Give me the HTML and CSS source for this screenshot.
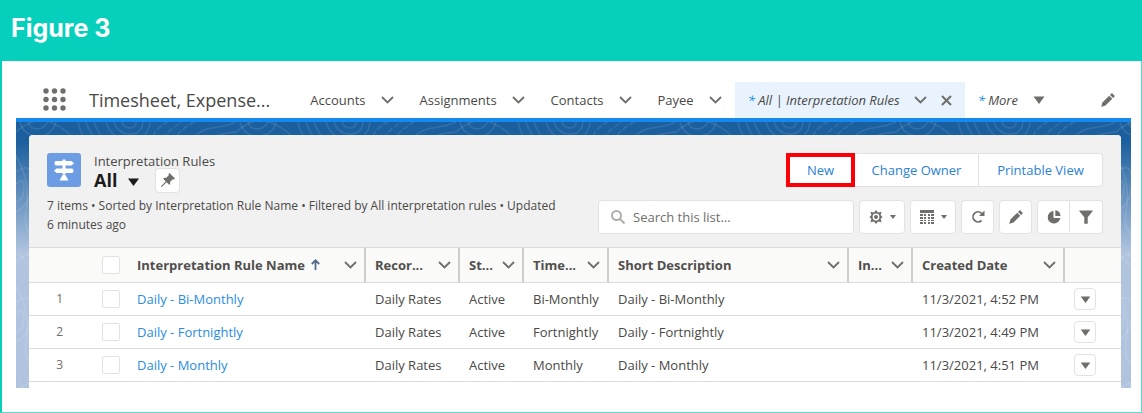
FILE: index.html
```html
<!DOCTYPE html>
<html lang="en">
<head>
    <meta charset="UTF-8">
    <meta name="viewport" content="width=device-width, initial-scale=1.0">
    <title>Interpretation Rules</title>
    <link rel="stylesheet" href="styles.css">
</head>
<body>
    <!-- shared icons -->
    <svg class="sprite" aria-hidden="true">
        <symbol id="chevron" viewBox="0 0 13 8"><path d="M1 1l5.500 5.500L12 1" fill="none" stroke="currentColor" stroke-width="1.800"/></symbol>
        <symbol id="down" viewBox="0 0 12 8"><path d="M0.500 0.500h11L6 8z" fill="currentColor"/></symbol>
        <symbol id="pencil" viewBox="0 0 14 14"><path d="M10.300 0.600q.6-.6 1.200 0l1.900 1.900q.6.6 0 1.200l-1.300 1.300-3.100-3.100zM8.200 2.700l3.100 3.100-6.800 6.800-3.900 1.100q-.4.100-.3-.3L1.400 9.500z" fill="currentColor"/></symbol>
    </svg>

    <section class="figure">
        <h1>Figure 3</h1>
        <div class="figure-body">
            <nav>
                <button class="launcher" aria-label="App launcher">
                    <svg width="24" height="24" viewBox="0 0 24 24" fill="#706e6b">
                        <circle cx="3" cy="3" r="2.700"/><circle cx="11.500" cy="3" r="2.700"/><circle cx="20" cy="3" r="2.700"/>
                        <circle cx="3" cy="11.500" r="2.700"/><circle cx="11.500" cy="11.500" r="2.700"/><circle cx="20" cy="11.500" r="2.700"/>
                        <circle cx="3" cy="20" r="2.700"/><circle cx="11.500" cy="20" r="2.700"/><circle cx="20" cy="20" r="2.700"/>
                    </svg>
                </button>
                <span class="app-name">Timesheet, Expense...</span>
                <ul class="tabs">
                    <li><a href="#">Accounts</a><button aria-label="Accounts list"><svg class="chevron"><use href="#chevron"/></svg></button></li>
                    <li><a href="#">Assignments</a><button aria-label="Assignments list"><svg class="chevron"><use href="#chevron"/></svg></button></li>
                    <li><a href="#">Contacts</a><button aria-label="Contacts list"><svg class="chevron"><use href="#chevron"/></svg></button></li>
                    <li><a href="#">Payee</a><button aria-label="Payee list"><svg class="chevron"><use href="#chevron"/></svg></button></li>
                    <li class="active">
                        <a href="#"><b>*</b> All | Interpretation Rules</a>
                        <button aria-label="Rules list"><svg class="chevron"><use href="#chevron"/></svg></button>
                        <button aria-label="Close tab"><svg width="11" height="11"><path d="M1 1l9 9M10 1l-9 9" stroke="currentColor" stroke-width="2"/></svg></button>
                    </li>
                    <li class="more"><a href="#"><b>*</b> More</a><button aria-label="More tabs"><svg width="12" height="8"><use href="#down"/></svg></button></li>
                </ul>
                <button class="edit-nav" aria-label="Edit nav items"><svg width="14" height="14"><use href="#pencil"/></svg></button>
            </nav>

            <div class="stage">
                <svg class="contours" aria-hidden="true">
                    <defs>
                        <pattern id="topo" width="220" height="130" patternUnits="userSpaceOnUse">
                            <g fill="none" stroke="#fff" stroke-opacity=".1" stroke-width="1.500">
                                <path d="M-10 20Q15-8 34 0T58 18 90 60 60 110 10 90-10 20z"/>
                                <path d="M4 0q4 14 18 14T40 0M12 0q2 7 9 7t11-7"/>
                                <path d="M62 0q2 12 14 28M70 0q4 12 14 24M78 0q4 12 14 20"/>
                                <path d="M90 0q6 18 24 18T134 0M98 0q4 12 16 12T127 0M106 0q2 6 8 6t6-6"/>
                                <path d="M134 22q4-16 18-22M144 24q4-14 22-24M152 26q8-16 26-26" stroke-dasharray="6 2"/>
                                <path d="M170 26q10-18 26-20t24-6M182 26q10-14 38-16"/>
                                <path d="M0 50q16-12 16 10T0 90M0 62q8-8 8 4T0 80M202 40q-10 20 18 26M208 70q-10 20 12 34"/>
                            </g>
                        </pattern>
                    </defs>
                    <rect width="100%" height="100%" fill="url(#topo)"/>
                </svg>

                <main>
                    <header>
                        <div class="title">
                            <svg class="object-icon" viewBox="0 0 34 34">
                                <rect width="34" height="34" rx="3" fill="#6c9ce4"/>
                                <g fill="#fff">
                                    <rect x="15.500" y="6.500" width="3" height="15"/>
                                    <path d="M9 8h15.500L27 10.200l-2.500 2.200H9q-1.500 0-1.500-2.200T9 8zM9.500 15.500H25q1.500 0 1.500 2.200T25 19.900H9.500L7 17.700z"/>
                                    <path d="M15.500 22h3l3 5.500h-9z"/>
                                </g>
                            </svg>
                            <div>
                                <p>Interpretation Rules</p>
                                <div class="view">
                                    <h2>All</h2>
                                    <button class="pick" aria-label="Select list view"><svg width="13" height="8"><use href="#down"/></svg></button>
                                    <button class="box pin" aria-label="Pin list">
                                        <svg width="16" height="16" viewBox="0 0 16 16"><path d="M9.500 1l5.500 5.500-1 1-1.200-.3-2.600 2.600q.4 2-.8 3.200L6.600 10.300 2 14.700l-1.200.5.500-1.200 4.400-4.600L3 6.600q1.200-1.200 3.200-.8l2.600-2.600L8.500 2z" fill="currentColor"/></svg>
                                    </button>
                                </div>
                            </div>
                        </div>
                        <div class="actions">
                            <button class="new">New</button>
                            <button class="owner">Change Owner</button>
                            <button class="print">Printable View</button>
                        </div>
                        <p class="meta">7 items • Sorted by Interpretation Rule Name • Filtered by All interpretation rules • Updated 6&nbsp;minutes ago</p>
                        <div class="tools">
                            <div class="search">
                                <svg width="14" height="14"><circle cx="5.500" cy="5.500" r="4.500" fill="none" stroke="#b0adab" stroke-width="2"/><path d="M9 9l4.500 4.500" stroke="#b0adab" stroke-width="2"/></svg>
                                <input type="text" placeholder="Search this list..." aria-label="Search this list">
                            </div>
                            <button class="box wide" aria-label="List view controls">
                                <svg width="14" height="14" viewBox="0 0 14 14"><path d="M7 0l2 2.400 3.600-.6-1 3.300L13.500 7l-1.900 1.900 1 3.300-3.600-.6L7 14l-2-2.400-3.600.6 1-3.300L.5 7l1.900-1.900-1-3.300 3.600.6z" fill="currentColor"/><circle cx="7" cy="7" r="3.400" fill="#fff"/><circle cx="7" cy="7" r="2" fill="currentColor"/></svg>
                                <svg width="6" height="4"><path d="M0 0h6L3 4z" fill="currentColor"/></svg>
                            </button>
                            <button class="box wide" aria-label="Display as">
                                <svg width="14" height="14" fill="currentColor"><path d="M0 0h14v3H0zM0 4h3v2H0zM4 4h2v2H4zM8 4h2v2H8zM11 4h3v2h-3zM0 7h3v2H0zM4 7h2v2H4zM8 7h2v2H8zM11 7h3v2h-3zM0 10h3v1H0zM4 10h2v1H4zM8 10h2v1H8zM11 10h3v1h-3zM0 12h3v2H0zM4 12h2v2H4zM8 12h2v2H8zM11 12h3v2h-3z"/></svg>
                                <svg width="6" height="4"><path d="M0 0h6L3 4z" fill="currentColor"/></svg>
                            </button>
                            <button class="box" aria-label="Refresh"><svg width="14" height="14"><path d="M10.500 10.500A5 5 0 1 1 10.500 3.300L12 5" fill="none" stroke="currentColor" stroke-width="1.800"/><path d="M13.500 0.500V6H8z" fill="currentColor"/></svg></button>
                            <button class="box" aria-label="Edit list"><svg width="14" height="14"><use href="#pencil"/></svg></button>
                            <div class="pair">
                                <button class="box" aria-label="Charts"><svg width="14" height="14"><path d="M6.500 1v7h6.800A6.300 6.300 0 1 1 6.500 1z" fill="currentColor"/><path d="M8.300.3A6 6 0 0 1 13.500 6H8.300z" fill="currentColor"/></svg></button>
                                <button class="box" aria-label="Filters"><svg width="14" height="14"><path d="M.4.500h13.200q.4.300 0 .8L8.700 7.300v5.900q0 .5-.5.500H5.800q-.5 0-.5-.5V7.300L.4 1.300Q0 .8.4.500z" fill="currentColor"/></svg></button>
                            </div>
                        </div>
                    </header>

                    <table>
                        <colgroup>
                            <col class="c-num"><col class="c-check"><col class="c-name"><col class="c-record"><col class="c-status">
                            <col class="c-time"><col><col class="c-status"><col class="c-date"><col class="c-menu">
                        </colgroup>
                        <thead>
                            <tr>
                                <th></th>
                                <th><input type="checkbox" aria-label="Select all"></th>
                                <th class="line"><div>Interpretation Rule Name <svg class="sort" width="9" height="12"><path d="M4.500 11V1.500M.800 5l3.700-3.700L8.200 5" fill="none" stroke="#54698d" stroke-width="1.800"/></svg><button aria-label="Name options"><svg class="chevron"><use href="#chevron"/></svg></button></div></th>
                                <th class="line"><div>Recor...<button aria-label="Record type options"><svg class="chevron"><use href="#chevron"/></svg></button></div></th>
                                <th class="line"><div>St...<button aria-label="Status options"><svg class="chevron"><use href="#chevron"/></svg></button></div></th>
                                <th class="line"><div>Time...<button aria-label="Timesheet options"><svg class="chevron"><use href="#chevron"/></svg></button></div></th>
                                <th class="line"><div>Short Description<button aria-label="Description options"><svg class="chevron"><use href="#chevron"/></svg></button></div></th>
                                <th class="line"><div>In...<button aria-label="Column options"><svg class="chevron"><use href="#chevron"/></svg></button></div></th>
                                <th class="line"><div>Created Date<button aria-label="Date options"><svg class="chevron"><use href="#chevron"/></svg></button></div></th>
                                <th></th>
                            </tr>
                        </thead>
                        <tbody>
                            <tr>
                                <td class="num">1</td>
                                <td><input type="checkbox" aria-label="Select row 1"></td>
                                <td><a href="#">Daily - Bi-Monthly</a></td>
                                <td>Daily Rates</td>
                                <td>Active</td>
                                <td>Bi-Monthly</td>
                                <td>Daily - Bi-Monthly</td>
                                <td></td>
                                <td>11/3/2021, 4:52 PM</td>
                                <td><button class="box row-menu" aria-label="Row actions"><svg width="11" height="7" viewBox="0 0 12 8"><use href="#down"/></svg></button></td>
                            </tr>
                            <tr>
                                <td class="num">2</td>
                                <td><input type="checkbox" aria-label="Select row 2"></td>
                                <td><a href="#">Daily - Fortnightly</a></td>
                                <td>Daily Rates</td>
                                <td>Active</td>
                                <td>Fortnightly</td>
                                <td>Daily - Fortnightly</td>
                                <td></td>
                                <td>11/3/2021, 4:49 PM</td>
                                <td><button class="box row-menu" aria-label="Row actions"><svg width="11" height="7" viewBox="0 0 12 8"><use href="#down"/></svg></button></td>
                            </tr>
                            <tr>
                                <td class="num">3</td>
                                <td><input type="checkbox" aria-label="Select row 3"></td>
                                <td><a href="#">Daily - Monthly</a></td>
                                <td>Daily Rates</td>
                                <td>Active</td>
                                <td>Monthly</td>
                                <td>Daily - Monthly</td>
                                <td></td>
                                <td>11/3/2021, 4:51 PM</td>
                                <td><button class="box row-menu" aria-label="Row actions"><svg width="11" height="7" viewBox="0 0 12 8"><use href="#down"/></svg></button></td>
                            </tr>
                        </tbody>
                    </table>
                    <div class="next-row"></div>
                </main>
            </div>
        </div>
    </section>
</body>
</html>
```

FILE: styles.css
```css
*{
    box-sizing: border-box;
}
body{
    margin: 0;
    font-family: "Open Sans", "Noto Sans", sans-serif;
    font-size: 13px;
    line-height: 18px;
    color: #4a4947;
}
h1, h2, p, ul{
    margin: 0;
    padding: 0;
}
a{
    color: inherit;
    text-decoration: none;
}
button{
    padding: 0;
    border: 0;
    background: none;
    font: inherit;
    color: #706e6b;
}
svg{
    display: block;
    flex: none;
}
.sprite{
    position: absolute;
    width: 0;
    height: 0;
}
.chevron{
    width: 13px;
    height: 8px;
}

/* figure frame */
.figure{
    border: 1px solid #5fd9cd;
    border-left: 2px solid #06cfbc;
    border-top: 0;
}
.figure h1{
    margin: 0 -1px 0 -2px;
    padding: 12px 11px 17px;
    background: #06cfbc;
    color: white;
    font-family: Inter, sans-serif;
    font-size: 25px;
    line-height: 32px;
    font-weight: 700;
}
.figure-body{
    padding: 21px 10px 24px 14px;
    background: white;
}

/* navigation */
nav{
    display: flex;
    align-items: center;
    height: 36px;
    padding: 0 16px 0 27px;
}
.app-name{
    margin: 0 27px 0 22px;
    font-size: 18px;
    line-height: 24px;
    white-space: nowrap;
}
.tabs{
    display: flex;
    align-self: stretch;
    list-style: none;
    white-space: nowrap;
}
.tabs li{
    display: flex;
    align-items: center;
    gap: 15px;
    padding: 0 13px;
}
.tabs .active{
    gap: 14px;
    background: #e8f3fd;
}
.tabs .active, .tabs .more{
    font-style: italic;
}
.tabs b{
    color: #1589ee;
    font-weight: 400;
}
.edit-nav{
    margin-left: auto;
}

/* blue backdrop */
.stage{
    position: relative;
    padding: 13px 10px 0 13px;
    border-top: 4px solid #1589ee;
    background: linear-gradient(#1b5f9e, #1b5f9e 20px, #b0c4df 130px);
}
.contours{
    position: absolute;
    top: 0;
    left: 0;
    width: 100%;
    height: 100%;
}
main{
    position: relative;
    border-radius: 4px 4px 0 0;
    background: white;
    overflow: hidden;
}

/* list header */
header{
    display: grid;
    grid-template-columns: 1fr auto;
    row-gap: 3px;
    padding: 18px 18px 13px;
    background: #f1f1f1;
}
.title{
    display: flex;
    gap: 13px;
    height: 40px;
}
.title p{
    line-height: 16px;
}
.object-icon{
    width: 34px;
    height: 34px;
}
.view{
    display: flex;
    align-items: center;
    height: 22px;
}
h2{
    font-size: 18px;
    line-height: 22px;
    color: #1c1b1b;
}
.pick{
    margin: 4px 15px 0 10px;
    color: #1c1b1b;
}
.box{
    display: flex;
    align-items: center;
    justify-content: center;
    width: 33px;
    height: 34px;
    border: 1px solid #e3e2e1;
    border-radius: 4px;
    background: white;
}
.pin{
    width: 25px;
    height: 25px;
}
.actions{
    display: flex;
    height: 34px;
    justify-content: flex-end;
}
.actions button{
    border: 1px solid #e3e2e1;
    border-left: 0;
    background: white;
    color: #2b82d4;
}
.actions .new{
    width: 69px;
    border: 4px solid #fb0007;
}
.actions .owner{
    width: 124px;
}
.actions .print{
    width: 124px;
    border-radius: 0 4px 4px 0;
}
.meta{
    max-width: 530px;
    font-size: 12px;
    line-height: 19px;
}
.tools{
    display: flex;
    gap: 5px;
    padding-top: 4px;
}
.search{
    display: flex;
    align-items: center;
    gap: 8px;
    width: 256px;
    height: 34px;
    padding: 0 12px;
    border: 1px solid #e3e2e1;
    border-radius: 4px;
    background: white;
}
.search input{
    flex: 1;
    min-width: 0;
    padding: 0;
    border: 0;
    outline: 0;
    font: inherit;
}
.search input::placeholder{
    color: #706e6b;
}
.wide{
    gap: 7px;
    width: 46px;
}
.pair{
    display: flex;
}
.pair .box:first-child{
    border-radius: 4px 0 0 4px;
}
.pair .box:last-child{
    border-left: 0;
    border-radius: 0 4px 4px 0;
}

/* records */
table{
    width: 100%;
    table-layout: fixed;
    border-collapse: separate;
    border-spacing: 0;
    white-space: nowrap;
}
.c-num{
    width: 62px;
}
.c-check{
    width: 37px;
}
.c-name{
    width: 238px;
}
.c-record{
    width: 94px;
}
.c-status{
    width: 64px;
}
.c-time{
    width: 85px;
}
.c-date{
    width: 152px;
}
.c-menu{
    width: 56px;
}
th, td{
    height: 33px;
    padding: 0 0 0 9px;
    border-bottom: 1px solid #dddbda;
    text-align: left;
}
th{
    height: 36px;
    border-top: 1px solid #dddbda;
    background: #fafaf9;
    color: #514f4d;
}
th div{
    display: flex;
    align-items: center;
}
th button{
    margin: 0 7px 0 auto;
}
.line{
    border-right: 2px solid #d0cecc;
}
.sort{
    margin-left: 6px;
}
td a{
    color: #2b8ddf;
}
.num{
    padding: 0 28px 0 0;
    font-size: 12px;
    text-align: right;
    color: #706e6b;
}
td:nth-child(2), th:nth-child(2){
    padding-left: 11px;
}
input[type=checkbox]{
    display: block;
    appearance: none;
    width: 18px;
    height: 18px;
    margin: 0;
    border: 1px solid #e3e2e1;
    border-radius: 2px;
    background: white;
}
.row-menu{
    width: 22px;
    height: 22px;
}
.next-row{
    height: 6px;
}
```
